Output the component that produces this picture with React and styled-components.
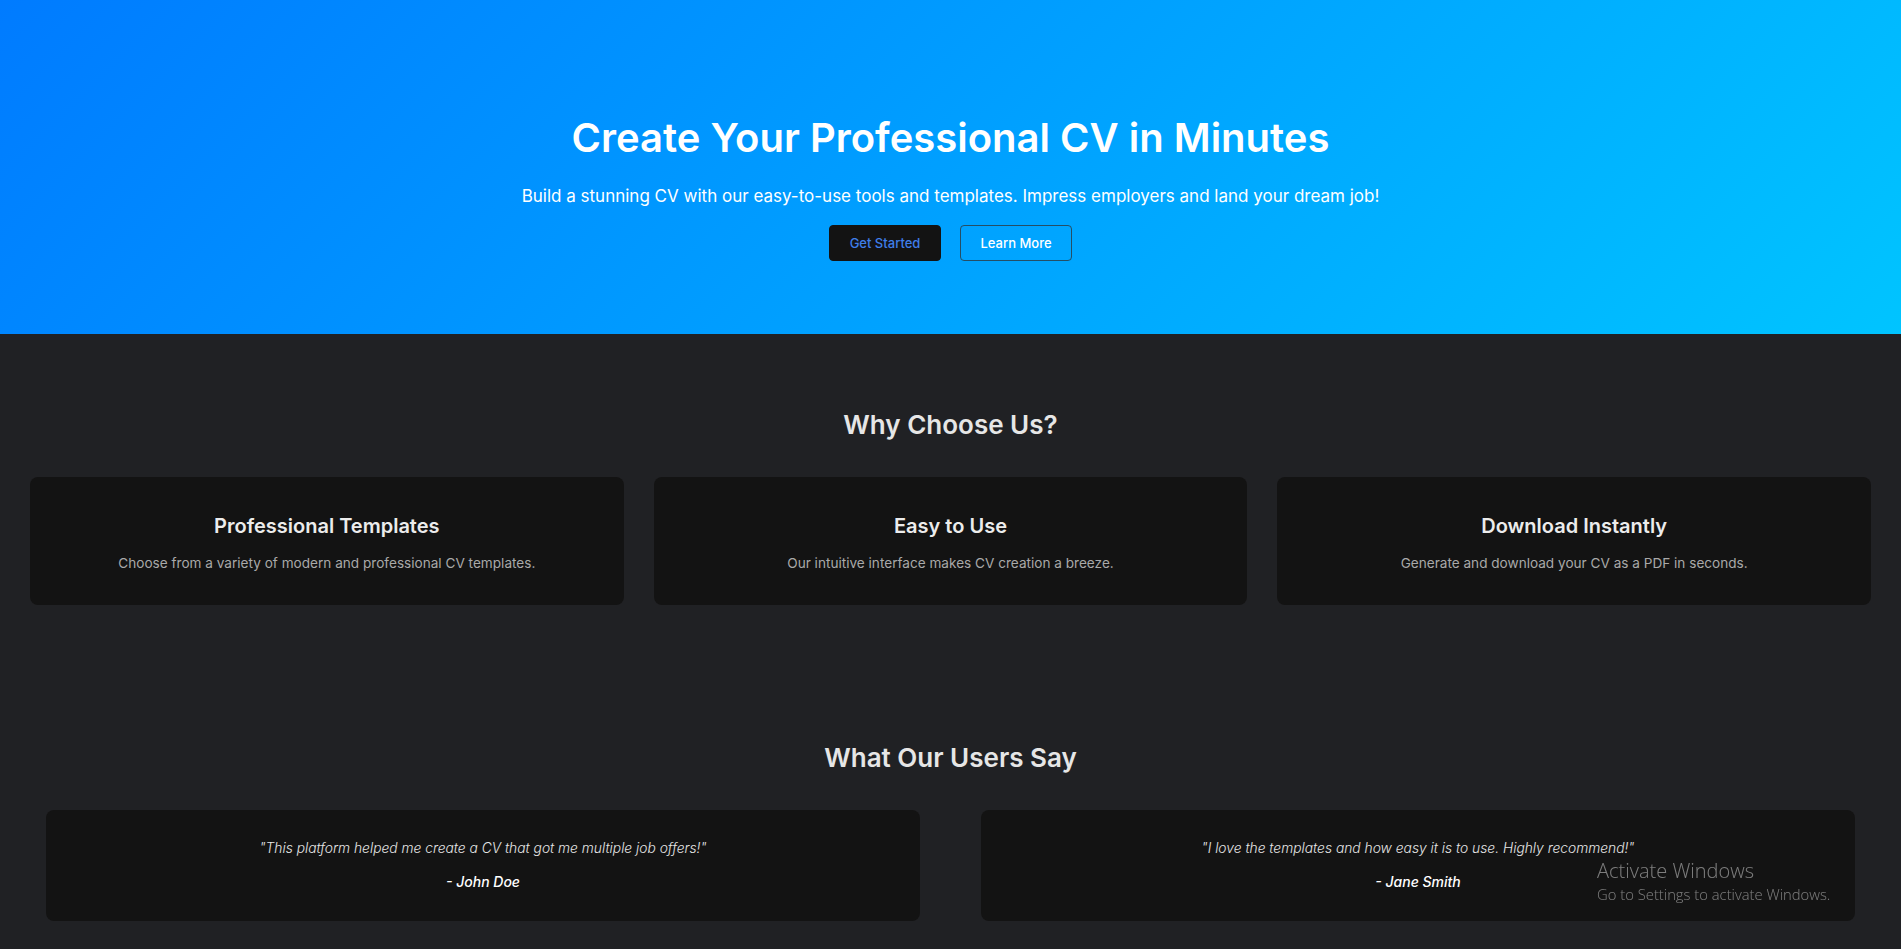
import React from "react";
import styled, { createGlobalStyle } from "styled-components";

const GlobalStyle = createGlobalStyle`
  body {
    margin: 0;
    background-color: #202124;
    font-family: "Inter", "Noto Sans", sans-serif;
    color: #e6e6e6;
  }
`;

const features = [
  {
    title: "Professional Templates",
    text: "Choose from a variety of modern and professional CV templates.",
  },
  {
    title: "Easy to Use",
    text: "Our intuitive interface makes CV creation a breeze.",
  },
  {
    title: "Download Instantly",
    text: "Generate and download your CV as a PDF in seconds.",
  },
];

const testimonials = [
  {
    quote: "\"This platform helped me create a CV that got me multiple job offers!\"",
    author: "- John Doe",
  },
  {
    quote: "\"I love the templates and how easy it is to use. Highly recommend!\"",
    author: "- Jane Smith",
  },
];

export default function App() {
  return (
    <>
      <GlobalStyle />
      <Hero>
        <HeroTitle>Create Your Professional CV in Minutes</HeroTitle>
        <HeroText>
          Build a stunning CV with our easy-to-use tools and templates. Impress
          employers and land your dream job!
        </HeroText>
        <ButtonRow>
          <Button $variant="dark">Get Started</Button>
          <Button $variant="outline">Learn More</Button>
        </ButtonRow>
      </Hero>

      <Section $top="75px">
        <SectionTitle>Why Choose Us?</SectionTitle>
        <FeatureGrid>
          {features.map((f) => (
            <FeatureCard key={f.title}>
              <CardTitle>{f.title}</CardTitle>
              <CardText>{f.text}</CardText>
            </FeatureCard>
          ))}
        </FeatureGrid>
      </Section>

      <Section $top="137px">
        <SectionTitle>What Our Users Say</SectionTitle>
        <TestimonialGrid>
          {testimonials.map((t) => (
            <TestimonialCard key={t.author}>
              <Quote>{t.quote}</Quote>
              <Author>{t.author}</Author>
            </TestimonialCard>
          ))}
        </TestimonialGrid>
      </Section>

      <Watermark>
        <WatermarkTitle>Activate Windows</WatermarkTitle>
        <WatermarkText>Go to Settings to activate Windows.</WatermarkText>
      </Watermark>
    </>
  );
}

let Hero = styled.header`
  height: 334px;
  box-sizing: border-box;
  padding-top: 114px;
  background: linear-gradient(135deg, #007bff 0%, #00c4ff 100%);
  text-align: center;
  color: #ffffff;
`;
let HeroTitle = styled.h1`
  margin: 0 0 21px;
  font-size: 40px;
  line-height: 48px;
  font-weight: 600;
`;
let HeroText = styled.p`
  margin: 0 0 15px;
  font-size: 17px;
  line-height: 27px;
  font-weight: 400;
`;
let ButtonRow = styled.div`
  display: flex;
  justify-content: center;
  gap: 19px;
`;
let Button = styled.button`
  width: 112px;
  height: 36px;
  border-radius: 4px;
  font-family: inherit;
  font-size: 13px;
  font-weight: 500;
  cursor: pointer;
  background: ${(p) => (p.$variant === "dark" ? "#131313" : "transparent")};
  color: ${(p) => (p.$variant === "dark" ? "#3f7ee8" : "#ffffff")};
  border: 1px solid
    ${(p) => (p.$variant === "dark" ? "#131313" : "rgba(50, 50, 50, 0.75)")};
`;
let Section = styled.section`
  padding: ${(p) => p.$top} 0 0;
  text-align: center;
`;
let SectionTitle = styled.h2`
  margin: 0 0 37px;
  font-size: 26px;
  line-height: 31px;
  font-weight: 600;
  color: #e6e6e6;
`;
let FeatureGrid = styled.div`
  display: grid;
  grid-template-columns: repeat(3, 1fr);
  gap: 30px;
  padding: 0 30px;
`;
let FeatureCard = styled.div`
  height: 128px;
  box-sizing: border-box;
  padding: 37px 20px 0;
  background-color: #131313;
  border-radius: 8px;
`;
let CardTitle = styled.h3`
  margin: 0 0 15px;
  font-size: 20px;
  line-height: 24px;
  font-weight: 600;
  color: #ececec;
`;
let CardText = styled.p`
  margin: 0;
  font-size: 13.6px;
  line-height: 21px;
  color: #a9a9a9;
`;
let TestimonialGrid = styled.div`
  display: grid;
  grid-template-columns: repeat(2, 1fr);
  gap: 61px;
  padding: 0 46px;
`;
let TestimonialCard = styled.div`
  height: 111px;
  box-sizing: border-box;
  padding-top: 28px;
  background-color: #131313;
  border-radius: 8px;
`;
let Quote = styled.p`
  margin: 0 0 12px;
  font-size: 13.8px;
  line-height: 21px;
  font-style: italic;
  font-weight: 300;
  color: #e6e6e6;
`;
let Author = styled.p`
  margin: 0;
  font-size: 14px;
  line-height: 21px;
  font-style: italic;
  font-weight: 500;
  color: #ffffff;
`;
let Watermark = styled.div`
  position: fixed;
  left: 1597px;
  top: 858px;
  font-family: "Open Sans", "Noto Sans", sans-serif;
  color: rgba(255, 255, 255, 0.45);
  pointer-events: none;
`;
let WatermarkTitle = styled.div`
  font-size: 20px;
  line-height: 26px;
  font-weight: 300;
`;
let WatermarkText = styled.div`
  font-size: 14.8px;
  line-height: 20px;
  font-weight: 300;
`;
